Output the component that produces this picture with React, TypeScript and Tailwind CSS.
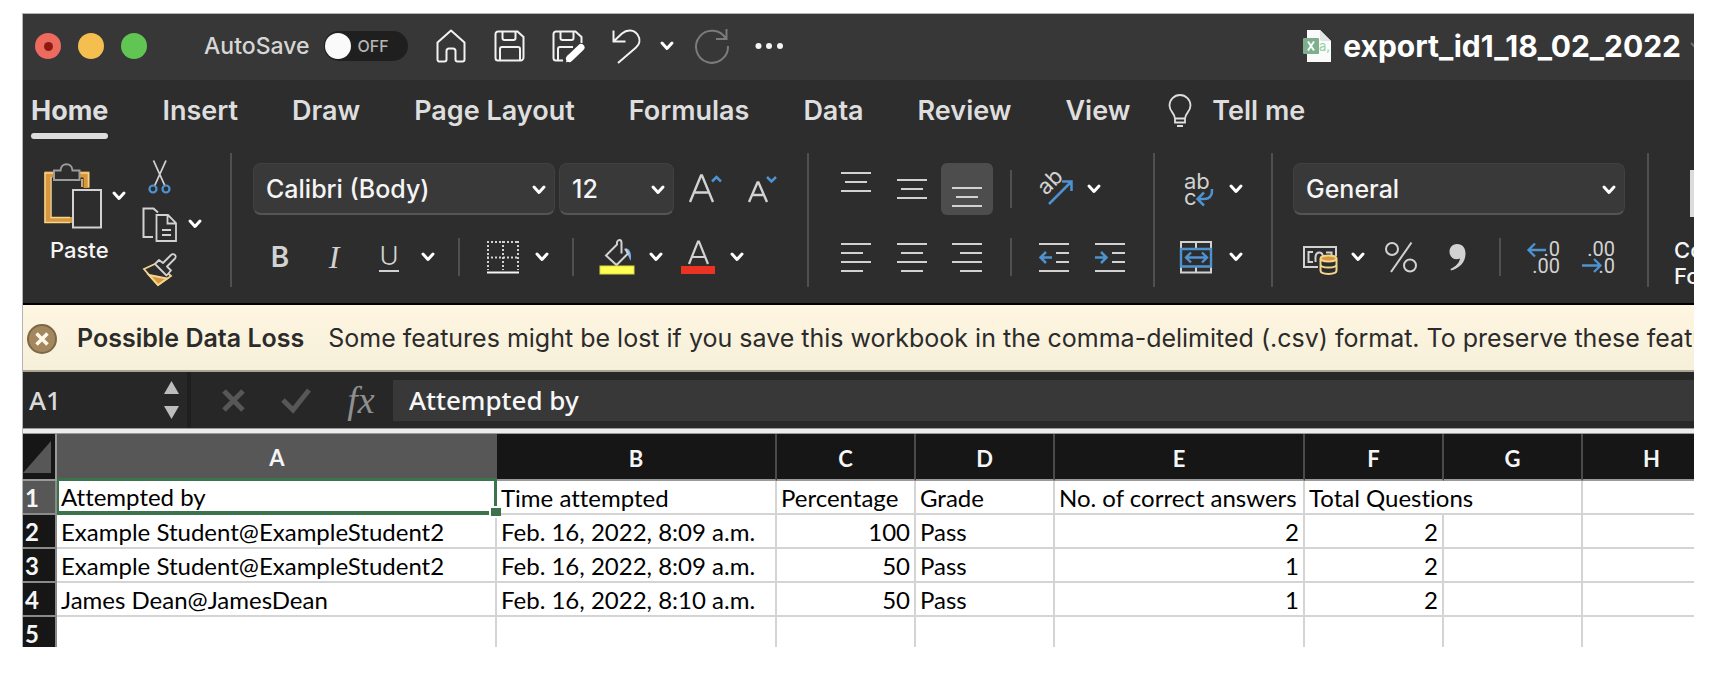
import { ReactNode } from "react";

const tabs = ["Insert", "Draw", "Page Layout", "Formulas", "Data", "Review", "View"];

const rows = [
  ["Attempted by", "Time attempted", "Percentage", "Grade", "No. of correct answers", "Total Questions"],
  ["Example Student@ExampleStudent2", "Feb. 16, 2022, 8:09 a.m.", "100", "Pass", "2", "2"],
  ["Example Student@ExampleStudent2", "Feb. 16, 2022, 8:09 a.m.", "50", "Pass", "1", "2"],
  ["James Dean@JamesDean", "Feb. 16, 2022, 8:10 a.m.", "50", "Pass", "1", "2"],
  ["", "", "", "", "", ""],
];

function Svg({ w, h, children, className = "" }: { w: number; h: number; children: ReactNode; className?: string }) {
  return (
    <svg
      width={w}
      height={h}
      viewBox={`0 0 ${w} ${h}`}
      fill="none"
      stroke="#d2d2d2"
      strokeWidth="2"
      className={`shrink-0 overflow-visible ${className}`}
      aria-hidden="true"
    >
      {children}
    </svg>
  );
}

function Chevron({ className = "" }: { className?: string }) {
  return (
    <Svg w={14} h={10} className={className}>
      <path d="M2 2l5 5.500l5-5.500" stroke="#fff" strokeWidth="3" strokeLinecap="round" strokeLinejoin="round" />
    </Svg>
  );
}

function Tool({ label, children, className = "" }: { label: string; children: ReactNode; className?: string }) {
  return (
    <button type="button" aria-label={label} className={`flex shrink-0 items-center ${className}`}>
      {children}
    </button>
  );
}

function Divider() {
  return <div className="h-[134px] w-0.5 shrink-0 bg-[#505050]" />;
}

function ShortDivider({ className = "" }: { className?: string }) {
  return <div className={`h-[38px] w-0.5 shrink-0 bg-[#505050] ${className}`} />;
}

function Picker({ label, value, className }: { label: string; value: string; className: string }) {
  return (
    <div className={`relative shrink-0 ${className}`}>
      <select
        aria-label={label}
        defaultValue={value}
        className="h-[52px] w-full appearance-none rounded-lg border border-b-2 border-[#414141] border-b-[#555] bg-[#393939] px-3 pt-0.5 text-[25px] font-medium text-[#f5f5f5]"
      >
        <option>{value}</option>
      </select>
      <Chevron className="pointer-events-none absolute top-[22px] right-[9px]" />
    </div>
  );
}

function Lines({ offsets, y, gap }: { offsets: number[][]; y: number; gap: number }) {
  return (
    <Svg w={30} h={52}>
      {offsets.map(([a, b], i) => (
        <path key={i} d={`M${a} ${y + i * gap}H${b}`} />
      ))}
    </Svg>
  );
}

function TitleBar() {
  return (
    <header className="flex h-[66px] items-center overflow-hidden bg-[#373737] pb-0.5 pl-3">
      <div className="flex shrink-0 gap-[17px]">
        <button type="button" aria-label="Close" className="grid size-[26px] place-items-center rounded-full bg-[#ed6a5f]">
          <span className="size-[9px] rounded-full bg-[#8c1a10]" />
        </button>
        <button type="button" aria-label="Minimize" className="size-[26px] rounded-full bg-[#f5bf4f]" />
        <button type="button" aria-label="Zoom" className="size-[26px] rounded-full bg-[#61c554]" />
      </div>
      <label className="ml-[57px] flex shrink-0 items-center gap-3.5 text-[23px] font-medium text-[#d6d6d6]">
        AutoSave
        <input type="checkbox" className="peer sr-only" />
        <span className="flex h-[30px] w-[84px] items-center gap-[7px] rounded-full bg-[#1f1f1f] text-base text-[#b5b5b5]">
          <span className="ml-px size-[26px] rounded-full bg-[#fafafa]" />
          OFF
        </span>
      </label>
      <Tool label="Start" className="ml-7">
        <Svg w={30} h={34}>
          <path
            d="M4 32.500H8.500a2 2 0 0 0 2-2V22a2.500 2.500 0 0 1 2.500-2.500h4A2.500 2.500 0 0 1 19.500 22v8.500a2 2 0 0 0 2 2H26.500a2 2 0 0 0 2-2V13.500L15 1.500L1.500 13.500V30.500a2 2 0 0 0 2.500 2z"
            stroke="#f2f2f2"
            strokeLinejoin="round"
          />
        </Svg>
      </Tool>
      <Tool label="Save" className="ml-7">
        <Svg w={31} h={32}>
          <g stroke="#f2f2f2">
            <path d="M4 1.500H23.500L29.500 7V27.500a3 3 0 0 1-3 3H4a2.500 2.500 0 0 1-2.500-2.500V4A2.500 2.500 0 0 1 4 1.500z" />
            <path d="M8.500 2v6a2 2 0 0 0 2 2h9a2 2 0 0 0 2-2V2M6 30.500V19a2 2 0 0 1 2-2H24a2 2 0 0 1 2 2V30.500" />
          </g>
        </Svg>
      </Tool>
      <Tool label="Save As" className="ml-[27px]">
        <Svg w={33} h={33}>
          <g stroke="#f2f2f2">
            <path d="M11 30.500H4A2.500 2.500 0 0 1 1.500 28V4A2.500 2.500 0 0 1 4 1.500H23.500L29.500 7V13" />
            <path d="M8.500 2v6a2 2 0 0 0 2 2h9a2 2 0 0 0 2-2V2M6 30.500V19a2 2 0 0 1 2-2H21" />
          </g>
          <path d="M17.500 28.500L29 17.500" stroke="#fff" strokeWidth="7" strokeLinecap="round" />
          <path d="M14 32.500l2-8 5 5z" fill="#fff" stroke="none" />
        </Svg>
      </Tool>
      <Tool label="Undo" className="ml-[27px] gap-[19px]">
        <Svg w={29} h={35}>
          <path d="M1.500 1.500V12.500H13.500M1.500 12.500L10 4.500C15 0 22 0.500 25.500 5.500C29 10.500 27.500 15.500 24 18.500L6 34" stroke="#f2f2f2" />
        </Svg>
        <Chevron />
      </Tool>
      <Tool label="Redo" className="ml-[20px]">
        <Svg w={36} h={36}>
          <path d="M22 11H32.500V1M32 11A16 16 0 1 0 34 18" stroke="#7b7b7b" />
        </Svg>
      </Tool>
      <Tool label="More commands" className="ml-[25px]">
        <Svg w={28} h={8}>
          <g fill="#f5f5f5" stroke="none">
            <circle cx="3.500" cy="4" r="3" />
            <circle cx="14" cy="4" r="3" />
            <circle cx="25" cy="4" r="3" />
          </g>
        </Svg>
      </Tool>
      <div className="ml-auto flex shrink-0 items-center gap-3">
        <Svg w={28} h={32}>
          <g stroke="none">
            <path d="M4 0H17L28 11V32H4z" fill="#fbfbfb" />
            <path d="M17 0L28 11H19a2 2 0 0 1-2-2z" fill="#dfe5e1" />
            <rect y="8" width="16" height="16" rx="1" fill="#7fae8e" />
            <path d="M5 11.500l6 9M11 11.500l-6 9" stroke="#f4fff6" strokeWidth="2" />
            <text x="16" y="21" fontSize="13" fill="#8fd0a6" fontFamily="Inter, sans-serif">a,</text>
          </g>
        </Svg>
        <h1 className="text-[30px] font-bold text-white">export_id1_18_02_2022</h1>
      </div>
      <div className="ml-2 w-[5px] shrink-0 overflow-hidden">
        <Svg w={14} h={10}>
          <path d="M2 2l5 5l5-5" stroke="#6f6f6f" strokeWidth="2" />
        </Svg>
      </div>
    </header>
  );
}

function Tabs() {
  return (
    <nav className="flex h-[63px] items-start gap-[54px] pt-[13px] pl-2 text-[27px] leading-9 font-semibold whitespace-nowrap text-[#dedede]">
      <a href="#home" className="flex flex-col gap-1 font-bold">
        Home
        <span className="h-1.5 rounded-full bg-[#dedede]" />
      </a>
      {tabs.map((t) => (
        <a key={t} href={`#${t}`}>
          {t}
        </a>
      ))}
      <button type="button" className="-ml-4 flex items-center gap-5">
        <Svg w={24} h={34}>
          <path
            d="M7 24.500C7 19.500 1.500 17.500 1.500 11.500A10.500 10.500 0 0 1 22.500 11.500C22.500 17.500 17 19.500 17 24.500V28.500H7zM7 24.500H17"
            stroke="#dedede"
            strokeWidth="1.800"
          />
          <path d="M9 32H15" stroke="#dedede" />
        </Svg>
        Tell me
      </button>
    </nav>
  );
}

function ClipboardGroup() {
  return (
    <div className="flex w-[207px] shrink-0 pl-[21px]">
      <button type="button" className="flex flex-col items-start gap-[7px] self-start pt-2.5 text-[22px] leading-7 font-medium text-[#f5f5f5]">
        <span className="flex items-center gap-2.5">
          <Svg w={58} h={66}>
            <path d="M28 57H3.500V11.500H10M34 11.500H42.500V25" stroke="#d8973c" strokeWidth="6" />
            <path d="M26 59.500H1V10H10M36 10H44.500V24M7 14V54.500H26M38 16V24" stroke="#f3d58c" strokeWidth="1.500" />
            <path d="M10 7.500H16.500C17 -1 28 -1 28.500 7.500H35.500V17H10z" stroke="#9c9c9c" fill="#2d2d2d" />
            <path d="M29 27H57V64.500H29z" fill="#2d2d2d" />
          </Svg>
          <Chevron />
        </span>
        <span className="pl-1.5">Paste</span>
      </button>
      <div className="ml-4 flex flex-col gap-[11px] pt-1.5">
        <Tool label="Cut">
          <Svg w={36} h={36}>
            <path d="M11.500 1.500L23 27M24 1.500L12.500 27" strokeWidth="1.800" />
            <circle cx="11" cy="30" r="3.500" stroke="#4f92d0" strokeWidth="2.200" />
            <circle cx="24" cy="30" r="3.500" stroke="#4f92d0" strokeWidth="2.200" />
          </Svg>
        </Tool>
        <Tool label="Copy" className="gap-2.5">
          <Svg w={36} h={36}>
            <path d="M11 31H1.500V2.500H11.500L16 6.500" />
            <path d="M14.500 9H26L34 17V35H14.500zM25.500 9V17.500H34M20 24H29M20 29H29" strokeWidth="1.800" />
          </Svg>
          <Chevron />
        </Tool>
        <Tool label="Format Painter">
          <Svg w={36} h={36}>
            <path d="M2 16L15 10L29 23L16 32z" fill="#2d2d2d" stroke="#f3d58c" strokeWidth="1.800" />
            <path d="M7 22L25 25.500L16 32z" fill="#d8973c" stroke="#f3d58c" />
            <path
              d="M13 11L17 7L21 10L29 2A2.500 2.500 0 0 1 33 5.500L25 13.500L29 17.500L24.500 22.500z"
              fill="#2d2d2d"
              strokeWidth="1.800"
              strokeLinejoin="round"
            />
          </Svg>
        </Tool>
      </div>
    </div>
  );
}

function FontGroup() {
  return (
    <div className="flex w-[575px] shrink-0 flex-col gap-4 pt-2.5 pl-[21px]">
      <div className="flex h-[52px] items-center">
        <Picker label="Font" value="Calibri (Body)" className="w-[302px]" />
        <Picker label="Font Size" value="12" className="ml-1 w-[115px]" />
        <Tool label="Increase Font Size" className="ml-3.5">
          <Svg w={36} h={36}>
            <path d="M2 31L13 4.500H14L25 31M6 21.500H21" strokeWidth="2.400" />
            <path d="M24 10.500L28.500 6L33 10.500" stroke="#4f92d0" strokeWidth="2.500" />
          </Svg>
        </Tool>
        <Tool label="Decrease Font Size" className="ml-[23px]">
          <Svg w={32} h={36}>
            <path d="M2 31L10.500 11.500H11.500L20 31M5 24H17" strokeWidth="2.400" />
            <path d="M20 6L24.500 10.500L29 6" stroke="#4f92d0" strokeWidth="2.500" />
          </Svg>
        </Tool>
      </div>
      <div className="flex h-[52px] items-center text-[28px] text-[#d2d2d2]">
        <Tool label="Bold" className="ml-3.5 w-[26px] justify-center font-semibold">
          B
        </Tool>
        <Tool label="Italic" className="ml-7 w-[26px] justify-center font-['Liberation_Serif',serif] text-[32px] italic">
          I
        </Tool>
        <Tool label="Underline" className="ml-8">
          <span className="flex w-5 flex-col items-center border-b-2 border-[#d2d2d2] text-[26px] leading-7 font-light">U</span>
          <Chevron className="ml-[22px]" />
        </Tool>
        <ShortDivider className="ml-[23px]" />
        <Tool label="Borders" className="ml-[26px] gap-[15px]">
          <Svg w={34} h={34}>
            <path d="M1 2H33M1 17.500H33" strokeDasharray="2 2" />
            <path d="M2 1V30M17 1V30M32 1V30" strokeDasharray="2 2" />
            <path d="M1 32.500H33" stroke="#f5f5f5" />
          </Svg>
          <Chevron />
        </Tool>
        <ShortDivider className="ml-[23px]" />
        <Tool label="Fill Color" className="ml-[25px] gap-3.5">
          <Svg w={36} h={36}>
            <path d="M25 10C29 8 33.500 12 31.500 22L28.500 15z" fill="#7fb4e3" stroke="none" />
            <path d="M18 5.500L7 16.500L17.500 26L29 14.500L26.500 10M22.500 14.500V4C22.500 0 19 0.500 18 3V6" />
            <rect x="1" y="27" width="34" height="8" fill="#ffff54" stroke="#d9d93f" strokeWidth="1" />
          </Svg>
          <Chevron />
        </Tool>
        <Tool label="Font Color" className="ml-[17px] gap-3.5">
          <Svg w={36} h={36}>
            <path d="M9 25L18 2.500H19L28 25M12 18H25" strokeWidth="2.200" />
            <rect x="1" y="27" width="34" height="8" fill="#ea3323" stroke="none" />
          </Svg>
          <Chevron />
        </Tool>
      </div>
    </div>
  );
}

function AlignGroup() {
  return (
    <div className="flex w-[344px] shrink-0 flex-col gap-4 pt-2.5 pl-5">
      <div className="flex h-[52px] items-center">
        <Tool label="Top Align" className="ml-3">
          <Lines offsets={[[0, 30], [4, 26], [0, 30]]} y={10} gap={9} />
        </Tool>
        <Tool label="Middle Align" className="ml-[26px]">
          <Lines offsets={[[0, 30], [4, 26], [0, 30]]} y={17} gap={9} />
        </Tool>
        <Tool label="Bottom Align" className="ml-3.5 h-[52px] w-[52px] justify-center rounded-md bg-[#4d4d4d]">
          <Lines offsets={[[0, 30], [4, 26], [0, 30]]} y={25} gap={9} />
        </Tool>
        <ShortDivider className="ml-[17px]" />
        <Tool label="Orientation" className="ml-[25px] gap-3.5">
          <Svg w={36} h={36}>
            <text x="0" y="0" transform="translate(9 25) rotate(-45)" fontSize="22" fill="#d2d2d2" stroke="none" fontFamily="Inter, sans-serif">
              ab
            </text>
            <path d="M12 33L34 11M25 10.500H34.500V20" stroke="#4f92d0" strokeWidth="2.500" />
          </Svg>
          <Chevron />
        </Tool>
      </div>
      <div className="flex h-[52px] items-center">
        <Tool label="Align Left" className="ml-3">
          <Lines offsets={[[0, 30], [0, 22], [0, 30], [0, 22]]} y={13} gap={9} />
        </Tool>
        <Tool label="Center" className="ml-[26px]">
          <Lines offsets={[[0, 30], [4, 26], [0, 30], [4, 26]]} y={13} gap={9} />
        </Tool>
        <Tool label="Align Right" className="ml-[25px]">
          <Lines offsets={[[0, 30], [8, 30], [0, 30], [8, 30]]} y={13} gap={9} />
        </Tool>
        <ShortDivider className="ml-7" />
        <Tool label="Decrease Indent" className="ml-[27px]">
          <Svg w={30} h={52}>
            <path d="M0 13H30M17 22H30M17 31H30M0 40H30" />
            <path d="M13 26.500H2M7 21L1.500 26.500L7 32" stroke="#4f92d0" strokeWidth="2.500" />
          </Svg>
        </Tool>
        <Tool label="Increase Indent" className="ml-[26px]">
          <Svg w={30} h={52}>
            <path d="M0 13H30M17 22H30M17 31H30M0 40H30" />
            <path d="M0 26.500H11M6 21L11.500 26.500L6 32" stroke="#4f92d0" strokeWidth="2.500" />
          </Svg>
        </Tool>
      </div>
    </div>
  );
}

function WrapGroup() {
  return (
    <div className="flex w-[116px] shrink-0 flex-col gap-4 pt-2.5 pl-6">
      <Tool label="Wrap Text" className="h-[52px] gap-4">
        <Svg w={34} h={36}>
          <g fontSize="22" fill="#d2d2d2" stroke="none" fontFamily="Inter, sans-serif">
            <text x="5" y="18">ab</text>
            <text x="5" y="34">c</text>
          </g>
          <path d="M33 18C33.500 24 31 28 25 28H19M25 21.500L18.500 28L25 34.500" stroke="#4f92d0" strokeWidth="2.500" />
        </Svg>
        <Chevron />
      </Tool>
      <Tool label="Merge and Center" className="h-[52px] gap-4">
        <Svg w={34} h={34}>
          <path d="M2 8V2H32V8M2 27V32.500H32V27M17 2V8M17 27V32" />
          <path d="M2 9H32V26.500H2zM8 17.500H27M12 12.500L7 17.500L12 22.500M23 12.500L28 17.500L23 22.500" stroke="#4f92d0" strokeWidth="2.400" />
        </Svg>
        <Chevron />
      </Tool>
    </div>
  );
}

function NumberGroup() {
  return (
    <div className="flex w-[374px] shrink-0 flex-col gap-4 pt-2.5 pl-5">
      <Picker label="Number Format" value="General" className="w-[332px]" />
      <div className="flex h-[52px] items-center">
        <Tool label="Accounting Format" className="ml-[9px] gap-[13px]">
          <Svg w={36} h={36}>
            <path d="M16 28H2V8H34V17" />
            <path d="M11 13H6.500V23H11M21 17C20 12.500 14 12 13.500 18V23M24 13.500H29.500V16" />
            <path d="M18.500 20V31.500C18.500 36 34.500 36 34.500 31.500V20M18.500 25.500C19 29.500 34 29.500 34.500 25.500" stroke="#f3d58c" />
            <ellipse cx="26.500" cy="19.500" rx="8" ry="3" fill="#d8973c" stroke="#f3d58c" />
          </Svg>
          <Chevron />
        </Tool>
        <Tool label="Percent Style" className="ml-5">
          <Svg w={32} h={32}>
            <circle cx="7" cy="8" r="6" />
            <circle cx="25" cy="24.500" r="6" />
            <path d="M26.500 1.500L6 31" />
          </Svg>
        </Tool>
        <Tool label="Comma Style" className="ml-8">
          <Svg w={17} h={28}>
            <path d="M8 1C13.500 1 16.500 5 16.500 10.500C16.500 19 11 25 2 27.500L1.500 26C7 23.500 10.500 19.500 11 15.500C6 18 0.500 14.500 0.500 8.500C0.500 4 4 1 8 1z" fill="#d2d2d2" stroke="none" />
          </Svg>
        </Tool>
        <ShortDivider className="ml-[33px]" />
        <Tool label="Increase Decimal" className="ml-[25px]">
          <Svg w={34} h={36}>
            <g fontSize="20" fill="#d2d2d2" stroke="none" fontFamily="Roboto, sans-serif" textAnchor="end">
              <text x="34" y="17">.0</text>
              <text x="34" y="34">.00</text>
            </g>
            <path d="M20 11H3M9 4.500L2.500 11L9 17.500" stroke="#4f92d0" strokeWidth="2.300" />
          </Svg>
        </Tool>
        <Tool label="Decrease Decimal" className="ml-[21px]">
          <Svg w={34} h={36}>
            <g fontSize="20" fill="#d2d2d2" stroke="none" fontFamily="Roboto, sans-serif" textAnchor="end">
              <text x="34" y="17">.00</text>
              <text x="34" y="34">.0</text>
            </g>
            <path d="M1 26.500H19M13 20L19.500 26.500L13 33" stroke="#4f92d0" strokeWidth="2.300" />
          </Svg>
        </Tool>
      </div>
    </div>
  );
}

function Ribbon() {
  return (
    <div className="flex h-[162px] overflow-hidden border-b-2 border-black pt-[10px]">
      <ClipboardGroup />
      <Divider />
      <FontGroup />
      <Divider />
      <AlignGroup />
      <Divider />
      <WrapGroup />
      <Divider />
      <NumberGroup />
      <Divider />
      <button
        type="button"
        className="flex min-w-0 flex-1 flex-col items-start overflow-hidden pt-[17px] pl-[25px] text-left text-[22px] leading-[26px] font-medium text-[#f5f5f5]"
      >
        <span className="mb-[20px] ml-4 h-[47px] w-10 shrink-0 bg-[#dcdcdc]" />
        <span>Conditional</span>
        <span>Formatting</span>
      </button>
    </div>
  );
}

function Banner() {
  return (
    <div
      role="alert"
      className="flex h-[67px] items-center overflow-hidden border-b-2 border-[#a9a595] bg-linear-to-b from-[#fef6e1] to-[#f6efda] pt-0.5 pl-1 text-[25px] whitespace-nowrap text-[#2b2b2b]"
    >
      <button type="button" aria-label="Dismiss" className="shrink-0">
        <Svg w={30} h={30}>
          <circle cx="15" cy="15" r="14" fill="#a3875f" stroke="#7d6747" />
          <path d="M9.500 9.500L20.500 20.500M20.500 9.500L9.500 20.500" stroke="#fff8e6" strokeWidth="3.500" />
        </Svg>
      </button>
      <strong className="ml-5 font-semibold">Possible Data Loss</strong>
      <span className="ml-6">
        Some features might be lost if you save this workbook in the comma-delimited (.csv) format. To preserve these features
      </span>
    </div>
  );
}

function FormulaBar() {
  return (
    <div className="flex h-[56px] items-center bg-[#272727] font-['Noto_Sans',sans-serif] text-[26px] font-medium">
      <input aria-label="Name Box" defaultValue="A1" className="w-[141px] shrink-0 bg-transparent pl-1.5 text-[#dadada]" />
      <div className="flex flex-col gap-3">
        <button type="button" aria-label="Previous name">
          <Svg w={15} h={13}>
            <path d="M0 13L7.500 0L15 13z" fill="#bdbdbd" stroke="none" />
          </Svg>
        </button>
        <button type="button" aria-label="Next name">
          <Svg w={15} h={13}>
            <path d="M0 0L7.500 13L15 0z" fill="#bdbdbd" stroke="none" />
          </Svg>
        </button>
      </div>
      <div className="ml-2 h-full w-1 bg-[#1f1f1f]" />
      <Tool label="Cancel" className="ml-[31px]">
        <Svg w={23} h={23}>
          <path d="M2 2L21 21M21 2L2 21" stroke="#575757" strokeWidth="5" />
        </Svg>
      </Tool>
      <Tool label="Enter" className="ml-9">
        <Svg w={30} h={25}>
          <path d="M2 12L12 22L28 2" stroke="#575757" strokeWidth="5" />
        </Svg>
      </Tool>
      <Tool label="Insert Function" className="ml-[34px] w-8 justify-center font-['Liberation_Serif',serif] text-[38px] font-normal text-[#8f8f8f] italic">
        fx
      </Tool>
      <input
        aria-label="Formula Bar"
        defaultValue="Attempted by"
        className="ml-4 h-[41px] min-w-0 flex-1 bg-[#383838] px-4 text-[#f7f7f7]"
      />
    </div>
  );
}

function Sheet() {
  const cell = "border-r-2 border-b-2 border-[#d4d4d4] px-1 pt-0.5 pb-0";
  return (
    <div className="h-[213px] overflow-hidden">
      <table className="w-[1699px] table-fixed border-separate border-spacing-0 font-[Lato,sans-serif] text-2xl leading-[30px] whitespace-nowrap text-black [font-variant-ligatures:none]">
        <colgroup>
          <col className="w-[34px]" />
          <col className="w-[440px]" />
          <col className="w-[280px]" />
          <col className="w-[139px]" />
          <col className="w-[139px]" />
          <col className="w-[250px]" />
          <col className="w-[139px]" />
          <col className="w-[139px]" />
          <col className="w-[139px]" />
        </colgroup>
        <thead>
          <tr className="h-[47px] bg-[#161616] text-[22px] text-[#f5f5f5]">
            <th scope="col" aria-label="Select all" className="border-r-2 border-b-2 border-[#9a9a9a] p-0 align-bottom">
              <Svg w={30} h={34} className="mb-1">
                <path d="M28 0V32H0z" fill="#575757" stroke="none" />
              </Svg>
            </th>
            {["A", "B", "C", "D", "E", "F", "G", "H"].map((c) => (
              <th
                key={c}
                scope="col"
                className={
                  c === "A"
                    ? "border-b-3 border-[#3d734c] bg-[#575757] p-0 pt-1 font-bold"
                    : "border-r-2 border-b-2 border-r-[#4a4a4a] border-b-[#9a9a9a] p-0 pt-1 font-bold"
                }
              >
                {c}
              </th>
            ))}
          </tr>
        </thead>
        <tbody>
          {rows.map((r, i) => (
            <tr key={i} className="h-[34px]">
              <th
                scope="row"
                className={`border-r-2 border-b-2 border-[#8a8a8a] p-0 pt-0.5 text-left font-bold text-[#f5f5f5] ${i === 0 ? "bg-[#575757]" : "bg-[#161616]"}`}
              >
                <span className="pl-0.5">{i + 1}</span>
              </th>
              {r.map((v, j) => {
                if (i === 0 && j === 0) {
                  return (
                    <td key={j} className="relative border-r-3 border-b-4 border-l-2 border-[#3d734c] px-0.5 pt-0.5 pb-0 leading-7">
                      {v}
                      <span className="absolute -right-[7px] -bottom-[7px] size-3 border-2 border-r-0 border-white bg-[#3d734c]" />
                    </td>
                  );
                }
                if (i === 0 && j === 5) {
                  return (
                    <td key={j} colSpan={2} className={cell}>
                      {v}
                    </td>
                  );
                }
                return (
                  <td key={j} className={`${cell} ${i > 0 && [2, 4, 5].includes(j) ? "text-right" : ""}`}>
                    {v}
                  </td>
                );
              })}
              {i > 0 && <td className={cell} />}
              <td className={cell} />
            </tr>
          ))}
        </tbody>
      </table>
    </div>
  );
}

export default function App() {
  return (
    <div className="bg-white pt-[13px] pr-[34px] pb-[27px] pl-[22px] font-[Inter,sans-serif]">
      <main className="overflow-hidden border-t border-l border-[#b4b4b4] bg-[#2d2d2d]">
        <TitleBar />
        <Tabs />
        <Ribbon />
        <Banner />
        <FormulaBar />
        <div className="h-1.5 border-y border-[#9a9a9a] bg-[#ececec]" />
        <div className="bg-white">
          <Sheet />
        </div>
      </main>
    </div>
  );
}
